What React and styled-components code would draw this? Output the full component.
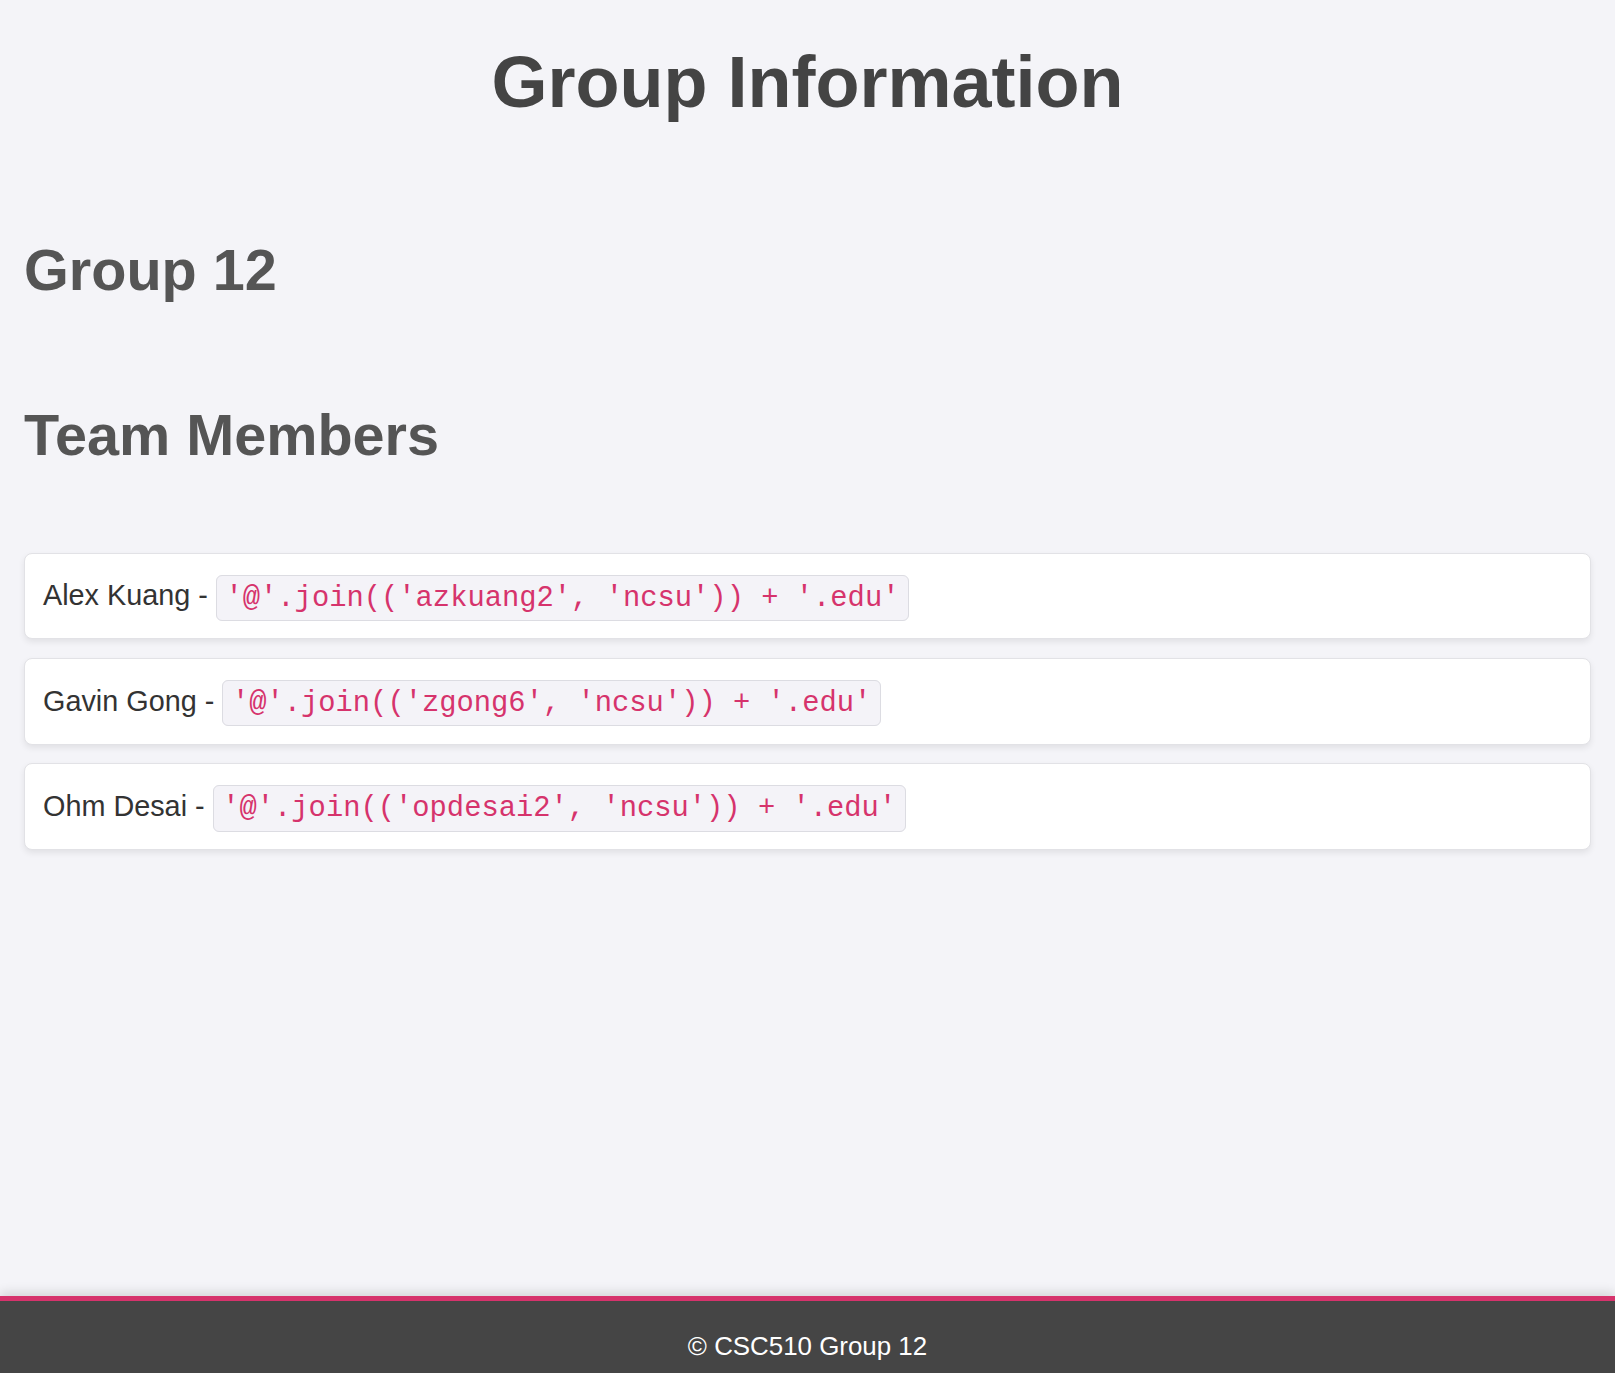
import React from 'react'
import styled, { createGlobalStyle } from 'styled-components'

const GlobalStyle = createGlobalStyle`
    html, body {
        margin: 0;
        padding: 0;
        background: #f4f4f8;
        font-family: "Liberation Sans", Arial, sans-serif;
        font-size: 28.8px;
        color: #333;
    }
`

const members = [
    { name: 'Alex Kuang', id: 'azkuang2' },
    { name: 'Gavin Gong', id: 'zgong6' },
    { name: 'Ohm Desai', id: 'opdesai2' },
]

const Page = styled.div`
    min-height: 100vh;
    display: flex;
    flex-direction: column;
`

const Header = styled.header`
    padding-top: 39px;
    text-align: center;
`

const Title = styled.h1`
    margin: 0;
    font-size: 72px;
    line-height: 1.2;
    font-weight: 700;
    color: #444;
`

const Main = styled.main`
    flex: 1;
    padding: 0 24px;
`

const Heading = styled.h2`
    margin: ${props => props.top}px 0 0;
    font-size: 57.6px;
    line-height: 1.2;
    font-weight: 700;
    color: #555;
`

const MemberList = styled.div`
    margin-top: 83px;
    display: flex;
    flex-direction: column;
    gap: 18.5px;
`

const Card = styled.div`
    background: #fff;
    border: 1px solid #e2e2e6;
    border-radius: 8px;
    box-shadow: 0 3px 6px rgba(0, 0, 0, 0.08);
    padding: 20.8px 18px;
    line-height: 1.5;
`

const Code = styled.code`
    font-family: "Liberation Mono", "Courier New", monospace;
    font-size: 28.8px;
    line-height: 1;
    color: #d6336c;
    background: #f4f3f8;
    border: 1px solid #dcdce2;
    border-radius: 6px;
    padding: 5.8px 8.6px;
`

const Footer = styled.footer`
    background: #454545;
    border-top: 5px solid #d6336c;
    box-shadow: 0 -4px 10px rgba(0, 0, 0, 0.12);
    color: #fff;
    text-align: center;
    font-size: 25.9px;
    padding: 31px 0 12px;
`

function App(){
    return(
        <Page>
            <GlobalStyle />
            <Header>
                <Title>Group Information</Title>
            </Header>
            <Main>
                <Heading top={111}>Group 12</Heading>
                <Heading top={95}>Team Members</Heading>
                <MemberList>
                    {members.map(m => (
                        <Card key={m.id}>
                            {m.name} - <Code>{`'@'.join(('${m.id}', 'ncsu')) + '.edu'`}</Code>
                        </Card>
                    ))}
                </MemberList>
            </Main>
            <Footer>© CSC510 Group 12</Footer>
        </Page>
    )
}

export default App
